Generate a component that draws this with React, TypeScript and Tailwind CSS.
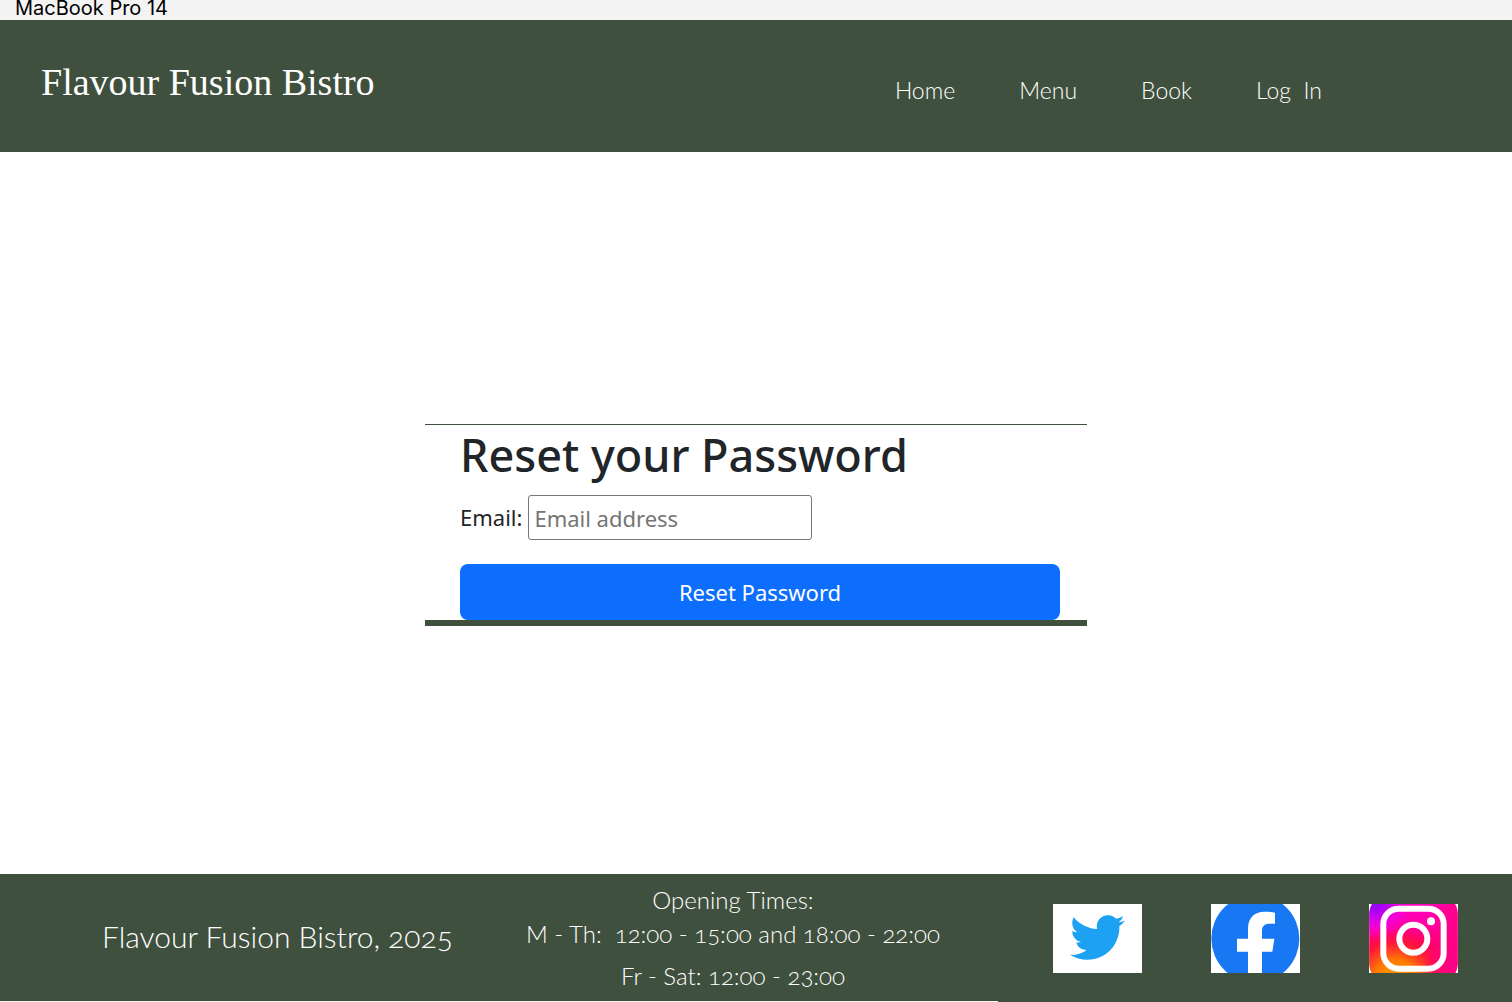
const navItems = ["Home", "Menu", "Book", "Log  In"];

function TwitterTile() {
  return (
    <svg viewBox="0 0 89 69" className="h-[69px] w-[89px]" aria-hidden="true">
      <rect width="89" height="69" fill="#fff" />
      <path
        transform="translate(17 6) scale(2.29)"
        fill="#1da1f2"
        d="M23.953 4.57a10 10 0 01-2.825.775 4.958 4.958 0 002.163-2.723c-.951.555-2.005.959-3.127 1.184a4.92 4.92 0 00-8.384 4.482C7.69 8.095 4.067 6.13 1.64 3.162a4.822 4.822 0 00-.666 2.475c0 1.71.87 3.213 2.188 4.096a4.904 4.904 0 01-2.228-.616v.06a4.923 4.923 0 003.946 4.827 4.996 4.996 0 01-2.212.085 4.936 4.936 0 004.604 3.417 9.867 9.867 0 01-6.102 2.105c-.39 0-.779-.023-1.17-.067a13.995 13.995 0 007.557 2.209c9.053 0 13.998-7.496 13.998-13.985 0-.21 0-.42-.015-.63A9.935 9.935 0 0024 4.59z"
      />
    </svg>
  );
}

function FacebookTile() {
  return (
    <svg viewBox="0 0 267 207" className="h-[69px] w-[89px]" aria-hidden="true">
      <rect width="267" height="207" fill="#fff" />
      <circle cx="133" cy="104" r="132" fill="#1877f2" />
      <path
        fill="#fff"
        d="M111 207V143H78V104H111V74C111 42 130 23 160 23C172 23 183 24 192 26V59H176C160 59 153 67 153 80V104H190L184 143H153V207Z"
      />
    </svg>
  );
}

function InstagramTile() {
  return (
    <svg viewBox="0 0 267 207" className="h-[69px] w-[89px]" aria-hidden="true">
      <defs>
        <linearGradient id="ig-base" x1="0" y1="0" x2="0" y2="1">
          <stop offset="0" stopColor="#ff00c0" />
          <stop offset="0.3" stopColor="#ff00a8" />
          <stop offset="0.6" stopColor="#ff0060" />
          <stop offset="1" stopColor="#ff1070" />
        </linearGradient>
        <radialGradient id="ig-warm" gradientUnits="userSpaceOnUse" cx="80" cy="240" r="180">
          <stop offset="0" stopColor="#ffa800" />
          <stop offset="0.4" stopColor="#ff7a00" />
          <stop offset="0.7" stopColor="#ff1a30" stopOpacity="0.8" />
          <stop offset="1" stopColor="#ff0060" stopOpacity="0" />
        </radialGradient>
        <radialGradient id="ig-cool" gradientUnits="userSpaceOnUse" cx="10" cy="-20" r="130">
          <stop offset="0" stopColor="#7a10ff" />
          <stop offset="0.35" stopColor="#b000f4" />
          <stop offset="0.65" stopColor="#ee00e0" stopOpacity="0.9" />
          <stop offset="1" stopColor="#ff00c8" stopOpacity="0" />
        </radialGradient>
        <linearGradient id="ig-side" x1="0" y1="0" x2="1" y2="0">
          <stop offset="0.6" stopColor="#ff0090" stopOpacity="0" />
          <stop offset="1" stopColor="#ff0088" />
        </linearGradient>
        <clipPath id="ig-clip">
          <rect x="1" y="-28" width="265" height="264" rx="58" />
        </clipPath>
      </defs>
      <rect width="267" height="207" fill="#fff" />
      <g clipPath="url(#ig-clip)">
        <rect width="267" height="207" fill="url(#ig-base)" />
        <rect width="267" height="207" fill="url(#ig-warm)" />
        <rect width="267" height="207" fill="url(#ig-cool)" />
        <rect width="267" height="207" fill="url(#ig-side)" />
      </g>
      <g fill="none" stroke="#fff" strokeWidth="18">
        <rect x="43" y="14" width="181" height="180" rx="46" />
        <circle cx="133" cy="104" r="42" />
      </g>
      <circle cx="186" cy="52" r="12" fill="#fff" />
    </svg>
  );
}

export default function App() {
  return (
    <div className="flex min-h-screen flex-col bg-white">
      <div className="h-5 bg-[#f4f4f4] pl-[15px] font-['Inter',sans-serif] text-[20px] leading-4 text-black">
        MacBook Pro 14
      </div>

      <header className="flex h-[132px] items-center justify-between bg-[#40503e] pr-[190px] pl-[41px] text-white">
        <p className="pb-2 font-['Liberation_Serif',serif] text-[38px] leading-12">Flavour Fusion Bistro</p>
        <nav className="flex gap-16 pt-2 font-['Lato',sans-serif] text-[23px] leading-8 font-light">
          {navItems.map((item) => (
            <a key={item} href="#" className="whitespace-pre">
              {item}
            </a>
          ))}
        </nav>
      </header>

      <main className="flex flex-1 items-center justify-center pt-6">
        <form
          className="w-[662px] border-t border-b-6 border-[#40503e] pr-[27px] pl-[35px] font-['Noto_Sans',sans-serif] text-[22px] text-[#212529]"
          onSubmit={(e) => e.preventDefault()}
        >
          <h1 className="pt-1 text-[45px] leading-[52px] font-medium">Reset your Password</h1>
          <div className="mt-3.5 flex items-center gap-[6px]">
            <label htmlFor="email">Email:</label>
            <input
              id="email"
              type="email"
              placeholder="Email address"
              className="h-[45px] w-[284px] rounded-[3px] border border-[#767676] px-[5px] placeholder:text-[#757575]"
            />
          </div>
          <button type="submit" className="mt-6 h-14 w-full rounded-lg bg-[#0d6efd] text-white">
            Reset Password
          </button>
        </form>
      </main>

      <footer className="bg-[#40503e] font-['Lato',sans-serif] font-light text-white oldstyle-nums">
        <div className="grid h-[127px] grid-cols-[502fr_462fr_548fr] items-center">
          <p className="pb-1 pl-[102px] text-[30px] leading-10 whitespace-nowrap">Flavour Fusion Bistro, 2025</p>
          <div className="text-center text-[24px] leading-[34px] whitespace-nowrap">
            <p>Opening Times:</p>
            <p className="whitespace-pre">M - Th:  12:00 - 15:00 and 18:00 - 22:00</p>
            <p className="pt-2">Fr - Sat: 12:00 - 23:00</p>
          </div>
          <div className="flex justify-end gap-[69px] pt-px pr-[54px]">
            <a href="#" aria-label="Twitter"><TwitterTile /></a>
            <a href="#" aria-label="Facebook"><FacebookTile /></a>
            <a href="#" aria-label="Instagram"><InstagramTile /></a>
          </div>
        </div>
        <div className="h-px w-[66%] bg-[#f4f4f4]" />
      </footer>
    </div>
  );
}
